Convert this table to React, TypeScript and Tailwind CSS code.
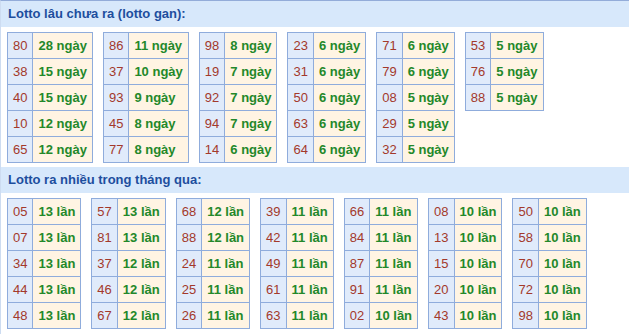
import React from "react";

type Row = [string, string];

const gan: Row[][] = [
  [["80", "28"], ["38", "15"], ["40", "15"], ["10", "12"], ["65", "12"]],
  [["86", "11"], ["37", "10"], ["93", "9"], ["45", "8"], ["77", "8"]],
  [["98", "8"], ["19", "7"], ["92", "7"], ["94", "7"], ["14", "6"]],
  [["23", "6"], ["31", "6"], ["50", "6"], ["63", "6"], ["64", "6"]],
  [["71", "6"], ["79", "6"], ["08", "5"], ["29", "5"], ["32", "5"]],
  [["53", "5"], ["76", "5"], ["88", "5"]],
];

const nhieu: Row[][] = [
  [["05", "13"], ["07", "13"], ["34", "13"], ["44", "13"], ["48", "13"]],
  [["57", "13"], ["81", "13"], ["37", "12"], ["46", "12"], ["67", "12"]],
  [["68", "12"], ["88", "12"], ["24", "11"], ["25", "11"], ["26", "11"]],
  [["39", "11"], ["42", "11"], ["49", "11"], ["61", "11"], ["63", "11"]],
  [["66", "11"], ["84", "11"], ["87", "11"], ["91", "11"], ["02", "10"]],
  [["08", "10"], ["13", "10"], ["15", "10"], ["20", "10"], ["43", "10"]],
  [["50", "10"], ["58", "10"], ["70", "10"], ["72", "10"], ["98", "10"]],
];

function Table({ rows, unit }: { rows: Row[]; unit: string }) {
  return (
    <table className="border-collapse border border-[#8facdc] self-start">
      <tbody>
        {rows.map(([n, v], i) => (
          <tr key={i} className="h-[26px]">
            <td className="border border-[#8facdc] bg-[#e0ebfb] px-[5px] text-center text-[13px] leading-none text-[#a3392b]">
              {n}
            </td>
            <td className="border border-[#8facdc] bg-[#fff4e3] px-[5px] text-left text-[13px] font-bold leading-none text-[#23882a] whitespace-nowrap">
              {v} {unit}
            </td>
          </tr>
        ))}
      </tbody>
    </table>
  );
}

function Header({ children }: { children: React.ReactNode }) {
  return (
    <div className="h-[26px] bg-[#d7e8fb] pl-[7px] flex items-center text-[13px] font-bold text-[#1d4e9e]">
      {children}
    </div>
  );
}

export default function App() {
  return (
    <div
      className="w-[629px] h-[334px] overflow-hidden bg-white border-t border-l border-t-[#93acd9] border-l-[#cddcf1]"
      style={{ fontFamily: '"Liberation Sans", Arial, sans-serif' }}
    >
      <Header>Lotto lâu chưa ra (lotto gan):</Header>
      <div className="flex gap-[10px] pl-[6px] pt-[5px] pb-[4px]">
        {gan.map((t, i) => (
          <Table key={i} rows={t} unit="ngày" />
        ))}
      </div>
      <Header>Lotto ra nhiều trong tháng qua:</Header>
      <div className="flex gap-[10px] pl-[6px] pt-[5px]">
        {nhieu.map((t, i) => (
          <Table key={i} rows={t} unit="lần" />
        ))}
      </div>
    </div>
  );
}
